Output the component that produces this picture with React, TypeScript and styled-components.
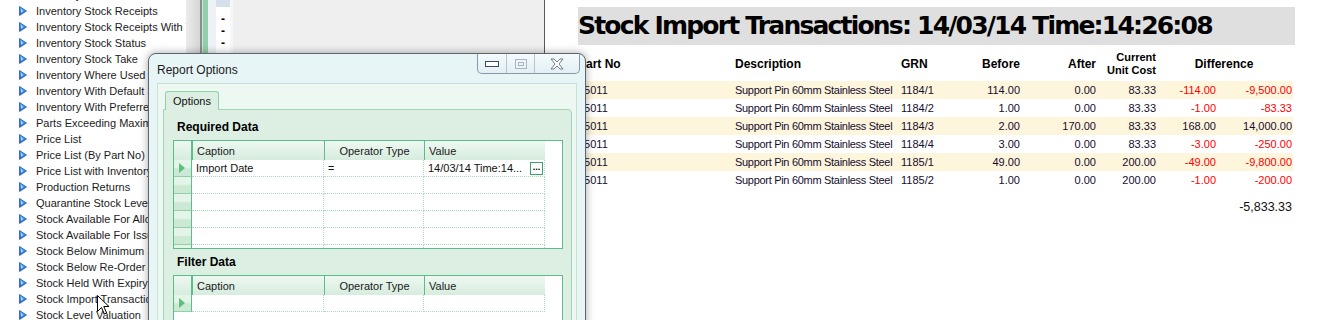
import React from "react";
import styled, { createGlobalStyle } from "styled-components";

const GlobalStyle = createGlobalStyle`
  html, body { margin: 0; padding: 0; background: #ffffff; }
  body { font-family: "Liberation Sans", Arial, sans-serif; color: #111; }
`;

const COLS = "157px 166px 57px 62px 76px 60px 60px 76px";
const GRID_COLS = "18px 132px 100px 121px";

const Desktop = styled.div`
  position: relative;
  width: 1329px;
  height: 320px;
  overflow: hidden;
  display: flex;
  background: #fff;
`;

/* ---------- left report list ---------- */
const ListPanel = styled.div`
  width: 186px;
  flex-shrink: 0;
  overflow: hidden;
  background: #fff;
`;

const ReportList = styled.ul`
  list-style: none;
  margin: -13px 0 0;
  padding: 0 0 0 19px;
`;

const ListItem = styled.li`
  display: flex;
  align-items: center;
  gap: 9px;
  height: 16px;
  white-space: nowrap;
  font-size: 11px;
  color: #1b1b1b;
  & > * {
    flex-shrink: 0;
  }
`;

const Splitter = styled.div`
  width: 14px;
  flex-shrink: 0;
  background: linear-gradient(to right, #ececec, #d6d6d6);
  border-right: 2px solid #8d8d8d;
`;

/* ---------- middle (tree) pane ---------- */
const TreePanel = styled.div`
  width: 342px;
  flex-shrink: 0;
  display: flex;
  background: #efefef;
  border-right: 1px solid #5a5a5a;
`;

const GreenStripe = styled.div`
  width: 5px;
  background: #93cfaa;
  border-left: 1px solid #c9e5d3;
`;

const RowGutter = styled.div`
  width: 8px;
  background: #eef2f7;
`;

const DashColumn = styled.div`
  width: 14px;
  background: #fff;
  border-right: 3px solid #f6f7f9;
  display: flex;
  flex-direction: column;
  align-items: center;
`;

const TopCell = styled.div`
  width: 100%;
  height: 7px;
  background: #d5e0ea;
  margin-bottom: 6px;
`;

const Dash = styled.div`
  height: 12px;
  line-height: 12px;
  font-size: 12px;
  font-weight: bold;
  color: #000;
`;

const TreeBody = styled.div`
  flex: 1;
`;

/* ---------- report pane ---------- */
const ReportPane = styled.div`
  flex: 1;
  padding: 7px 0 0 33px;
  background: #fff;
`;

const TitleBar = styled.div`
  width: 717px;
  height: 38px;
  background: #dfdfdf;
  font-family: "DejaVu Sans", Verdana, sans-serif;
  font-weight: bold;
  font-size: 25px;
  letter-spacing: -1.8px;
  line-height: 38px;
  box-sizing: border-box;
  white-space: nowrap;
  color: #000;
`;

const Table = styled.div`
  width: 715px;
  margin-top: 6px;
`;

const HeaderRow = styled.div`
  display: grid;
  grid-template-columns: ${COLS};
  height: 26px;
  align-items: center;
  margin-bottom: 4px;
  font-weight: bold;
  font-size: 12px;
  color: #000;
`;

const HeadCell = styled.div<{ $align?: string; $span?: number; $small?: boolean }>`
  text-align: ${(p) => p.$align || "left"};
  grid-column: span ${(p) => p.$span || 1};
  font-size: ${(p) => (p.$small ? "11px" : "12px")};
  line-height: 13px;
`;

const DataRow = styled.div<{ $striped?: boolean }>`
  display: grid;
  grid-template-columns: ${COLS};
  height: 18px;
  align-items: center;
  font-size: 11px;
  color: #160d2e;
  background: ${(p) => (p.$striped ? "#fdf5dc" : "transparent")};
`;

const Cell = styled.div<{ $align?: string; $red?: boolean; $tight?: boolean }>`
  text-align: ${(p) => p.$align || "left"};
  color: ${(p) => (p.$red ? "#ff0000" : "inherit")};
  letter-spacing: ${(p) => (p.$tight ? "-0.3px" : "0")};
  white-space: nowrap;
`;

const Total = styled.div`
  width: 714px;
  margin-top: 10px;
  text-align: right;
  font-size: 12.5px;
  line-height: 16px;
  color: #111;
`;

/* ---------- dialog ---------- */
const Dialog = styled.div`
  position: absolute;
  left: 148px;
  top: 53px;
  width: 438px;
  height: 300px;
  box-sizing: border-box;
  border: 1px solid #5d6670;
  border-radius: 8px 8px 0 0;
  background: #e8f5f7;
  box-shadow: 0 0 8px rgba(0, 0, 0, 0.35);
  display: flex;
  flex-direction: column;
  overflow: hidden;
`;

const DialogTitleRow = styled.div`
  height: 29px;
  flex-shrink: 0;
  display: flex;
  justify-content: space-between;
  padding: 0 5px 0 8px;
`;

const DialogTitle = styled.div`
  align-self: center;
  font-size: 12px;
  color: #1a1a1a;
  margin-top: 2px;
`;

const CaptionButtons = styled.div`
  display: flex;
  height: 19px;
  border: 1px solid #8b98a6;
  border-top: none;
  border-radius: 0 0 5px 5px;
  background: linear-gradient(#f4fbfd, #e3eff4);
  overflow: hidden;
`;

const CaptionButton = styled.div<{ $w: number }>`
  width: ${(p) => p.$w}px;
  display: flex;
  align-items: center;
  justify-content: center;
  & + & {
    border-left: 1px solid #b7c3cd;
  }
`;

const ClientArea = styled.div`
  flex: 1;
  min-height: 0;
  margin: 0 8px;
  border: 1px solid #c6e3d0;
  background: #eef8f2;
  padding: 7px 4px 0 5px;
  display: flex;
  flex-direction: column;
`;

const Tab = styled.div`
  align-self: flex-start;
  flex-shrink: 0;
  margin-left: 2px;
  height: 18px;
  padding: 0 7px;
  line-height: 18px;
  font-size: 11px;
  color: #111;
  background: #dcefe2;
  border: 1px solid #8fd0a9;
  border-bottom: none;
  border-radius: 3px 3px 0 0;
  position: relative;
  z-index: 1;
  margin-bottom: -1px;
`;

const TabPage = styled.div`
  flex: 1;
  min-height: 0;
  background: #dcefe2;
  border: 1px solid #9fd6b3;
  border-radius: 0 4px 0 0;
  padding: 8px 8px 0 9px;
`;

const SectionTitle = styled.div`
  height: 18px;
  line-height: 18px;
  padding-left: 4px;
  font-weight: bold;
  font-size: 12px;
  color: #000;
  margin-bottom: 4px;
`;

const DataGrid = styled.div<{ $h: number }>`
  height: ${(p) => p.$h}px;
  box-sizing: border-box;
  border: 1px solid #5bbd88;
  background: #fff;
  overflow: hidden;
  margin-bottom: 4px;
`;

const GridHeader = styled.div`
  display: grid;
  grid-template-columns: ${GRID_COLS};
  height: 19px;
  background: linear-gradient(#eef8f1, #d6ecde);
  width: 371px;
  font-size: 11px;
  color: #1a1a1a;
`;

const GridHeadCell = styled.div<{ $center?: boolean }>`
  display: flex;
  align-items: center;
  justify-content: ${(p) => (p.$center ? "center" : "flex-start")};
  padding-left: ${(p) => (p.$center ? "0" : "4px")};
  border-left: 1px solid #5bbd88;
  &:first-child {
    border-left: none;
    border-right: 1px solid #5bbd88;
  }
`;

const GridRow = styled.div`
  display: grid;
  grid-template-columns: ${GRID_COLS};
  height: 17px;
  width: 371px;
  font-size: 11px;
  color: #111;
`;

const Indicator = styled.div`
  background: linear-gradient(#e4f4e9 0%, #e4f4e9 45%, #cbe9d5 55%, #cbe9d5 100%);
  border-right: 1px solid #5bbd88;
  border-bottom: 1px solid #8fd0a9;
  display: flex;
  align-items: center;
  padding-left: 5px;
`;

const GridCell = styled.div`
  border-right: 1px dotted #a8dcbc;
  border-bottom: 1px dotted #a8dcbc;
  padding-left: 4px;
  display: flex;
  align-items: center;
  justify-content: space-between;
  white-space: nowrap;
  overflow: hidden;
`;

const EllipsisButton = styled.div`
  width: 11px;
  height: 11px;
  margin-right: 1px;
  border: 1px solid #3ba56a;
  background: #fff;
  font-size: 9px;
  font-weight: bold;
  line-height: 8px;
  text-align: center;
  color: #000;
`;

const CursorWrap = styled.div`
  position: absolute;
  left: 97px;
  top: 295px;
`;

/* ---------- icons ---------- */
const ReportIcon = () => (
  <svg width="8" height="10" viewBox="0 0 8 10">
    <defs>
      <linearGradient id="ri" x1="0" y1="0" x2="0" y2="1">
        <stop offset="0" stopColor="#5fb4f4" />
        <stop offset="1" stopColor="#1a5fc9" />
      </linearGradient>
    </defs>
    <polygon points="0.5,0.5 7.5,5 0.5,9.5" fill="url(#ri)" stroke="#1c58b8" strokeWidth="0.8" />
    <polygon points="2,3 4.5,5 2,7" fill="#cfe8ff" opacity="0.8" />
  </svg>
);

const RowArrow = () => (
  <svg width="6" height="10" viewBox="0 0 6 10">
    <polygon points="0,0 6,5 0,10" fill="#5cbf7e" />
  </svg>
);

const MinIcon = () => (
  <svg width="14" height="6" viewBox="0 0 14 6">
    <rect x="0.5" y="0.5" width="13" height="5" fill="#fff" stroke="#3b4a60" />
  </svg>
);

const MaxIcon = () => (
  <svg width="12" height="10" viewBox="0 0 12 10">
    <rect x="0.5" y="0.5" width="11" height="9" fill="none" stroke="#a9b4bf" />
    <rect x="3.5" y="3.5" width="5" height="3" fill="none" stroke="#a9b4bf" />
  </svg>
);

const CloseIcon = () => (
  <svg width="14" height="12" viewBox="0 0 14 12">
    <polygon
      points="1,1 4,1 7,4 10,1 13,1 9,6 13,11 10,11 7,8 4,11 1,11 5,6"
      fill="#fff"
      stroke="#6e7b88"
      strokeWidth="1"
      strokeLinejoin="round"
    />
  </svg>
);

const Cursor = () => (
  <svg width="13" height="21" viewBox="0 0 13 21">
    <path d="M0.5,0.5 L0.5,16.5 L4.5,12.5 L7.3,19 L9.6,18 L6.8,11.5 L12,11.5 Z" fill="#fff" stroke="#000" strokeWidth="1" />
  </svg>
);

/* ---------- data ---------- */
const reports = [
  "Inventory Stock Level",
  "Inventory Stock Receipts",
  "Inventory Stock Receipts With Value",
  "Inventory Stock Status",
  "Inventory Stock Take",
  "Inventory Where Used",
  "Inventory With Default Supplier",
  "Inventory With Preferred Supplier",
  "Parts Exceeding Maximum Stock",
  "Price List",
  "Price List (By Part No)",
  "Price List with Inventory",
  "Production Returns",
  "Quarantine Stock Level",
  "Stock Available For Allocation",
  "Stock Available For Issue",
  "Stock Below Minimum Stock",
  "Stock Below Re-Order Level",
  "Stock Held With Expiry Date",
  "Stock Import Transactions",
  "Stock Level Valuation",
];

type Tx = { grn: string; before: string; after: string; cost: string; qty: string; value: string };

const transactions: Tx[] = [
  { grn: "1184/1", before: "114.00", after: "0.00", cost: "83.33", qty: "-114.00", value: "-9,500.00" },
  { grn: "1184/2", before: "1.00", after: "0.00", cost: "83.33", qty: "-1.00", value: "-83.33" },
  { grn: "1184/3", before: "2.00", after: "170.00", cost: "83.33", qty: "168.00", value: "14,000.00" },
  { grn: "1184/4", before: "3.00", after: "0.00", cost: "83.33", qty: "-3.00", value: "-250.00" },
  { grn: "1185/1", before: "49.00", after: "0.00", cost: "200.00", qty: "-49.00", value: "-9,800.00" },
  { grn: "1185/2", before: "1.00", after: "0.00", cost: "200.00", qty: "-1.00", value: "-200.00" },
];

const EmptyRow = () => (
  <GridRow>
    <Indicator />
    <GridCell />
    <GridCell />
    <GridCell />
  </GridRow>
);

const GridHead = () => (
  <GridHeader>
    <GridHeadCell />
    <GridHeadCell>Caption</GridHeadCell>
    <GridHeadCell $center>Operator Type</GridHeadCell>
    <GridHeadCell>Value</GridHeadCell>
  </GridHeader>
);

export default function App() {
  return (
    <>
      <GlobalStyle />
      <Desktop>
        <ListPanel>
          <ReportList>
            {reports.map((r) => (
              <ListItem key={r}>
                <ReportIcon />
                <span>{r}</span>
              </ListItem>
            ))}
          </ReportList>
        </ListPanel>

        <Splitter />

        <TreePanel>
          <GreenStripe />
          <RowGutter />
          <DashColumn>
            <TopCell />
            <Dash>-</Dash>
            <Dash>-</Dash>
            <Dash>-</Dash>
          </DashColumn>
          <TreeBody />
        </TreePanel>

        <ReportPane>
          <TitleBar>Stock Import Transactions: 14/03/14 Time:14:26:08</TitleBar>
          <Table>
            <HeaderRow>
              <HeadCell>Part No</HeadCell>
              <HeadCell>Description</HeadCell>
              <HeadCell>GRN</HeadCell>
              <HeadCell $align="right">Before</HeadCell>
              <HeadCell $align="right">After</HeadCell>
              <HeadCell $align="right" $small>
                Current
                <br />
                Unit Cost
              </HeadCell>
              <HeadCell $align="center" $span={2}>
                Difference
              </HeadCell>
            </HeaderRow>
            {transactions.map((t, i) => (
              <DataRow key={t.grn} $striped={i % 2 === 0}>
                <Cell>15011</Cell>
                <Cell $tight>Support Pin 60mm Stainless Steel</Cell>
                <Cell>{t.grn}</Cell>
                <Cell $align="right">{t.before}</Cell>
                <Cell $align="right">{t.after}</Cell>
                <Cell $align="right">{t.cost}</Cell>
                <Cell $align="right" $red={t.qty.startsWith("-")}>
                  {t.qty}
                </Cell>
                <Cell $align="right" $red={t.value.startsWith("-")}>
                  {t.value}
                </Cell>
              </DataRow>
            ))}
          </Table>
          <Total>-5,833.33</Total>
        </ReportPane>

        <Dialog>
          <DialogTitleRow>
            <DialogTitle>Report Options</DialogTitle>
            <CaptionButtons>
              <CaptionButton $w={28}>
                <MinIcon />
              </CaptionButton>
              <CaptionButton $w={27}>
                <MaxIcon />
              </CaptionButton>
              <CaptionButton $w={44}>
                <CloseIcon />
              </CaptionButton>
            </CaptionButtons>
          </DialogTitleRow>
          <ClientArea>
            <Tab>Options</Tab>
            <TabPage>
              <SectionTitle>Required Data</SectionTitle>
              <DataGrid $h={109}>
                <GridHead />
                <GridRow>
                  <Indicator>
                    <RowArrow />
                  </Indicator>
                  <GridCell>Import Date</GridCell>
                  <GridCell>=</GridCell>
                  <GridCell>
                    <span>14/03/14 Time:14...</span>
                    <EllipsisButton>...</EllipsisButton>
                  </GridCell>
                </GridRow>
                <EmptyRow />
                <EmptyRow />
                <EmptyRow />
                <EmptyRow />
                <EmptyRow />
              </DataGrid>
              <SectionTitle>Filter Data</SectionTitle>
              <DataGrid $h={80}>
                <GridHead />
                <GridRow>
                  <Indicator>
                    <RowArrow />
                  </Indicator>
                  <GridCell />
                  <GridCell />
                  <GridCell />
                </GridRow>
              </DataGrid>
            </TabPage>
          </ClientArea>
        </Dialog>

        <CursorWrap>
          <Cursor />
        </CursorWrap>
      </Desktop>
    </>
  );
}
